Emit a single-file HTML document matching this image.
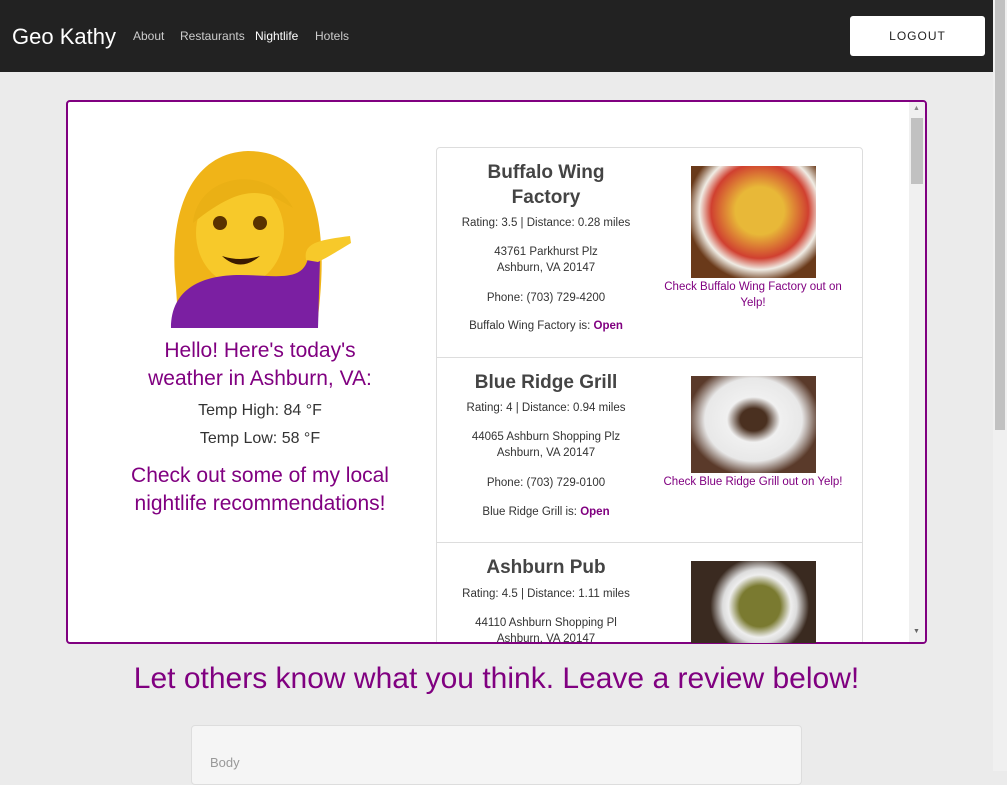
<!DOCTYPE html>
<html><head><style>
*{box-sizing:border-box;margin:0;padding:0}
body{width:1007px;height:771px;overflow:hidden;background:#ebebeb;font-family:"Liberation Sans",sans-serif;position:relative}
.a{position:absolute}
.nav{left:0;top:0;width:993px;height:72px;background:#222}
.c{text-align:center;color:#333}
.card{position:absolute;left:436px;width:427px;border:1px solid #ddd;background:#fff}
.t{position:absolute;left:0;width:218px;text-align:center;color:#333}
.h{font-size:19px;line-height:25px;font-weight:bold;color:#444}
.s{font-size:11.5px;line-height:16px}
.lk{position:absolute;width:200px;left:216px;text-align:center;font-size:11.5px;line-height:16px;color:#800080}
b{color:#800080}
</style></head><body>
<div class="a nav"></div>
<div class="a" style="left:12px;top:24px;color:#fff;font-size:22px">Geo Kathy</div>
<div class="a" style="left:133px;top:29px;color:#ccc;font-size:12px">About</div>
<div class="a" style="left:180px;top:29px;color:#ccc;font-size:12px">Restaurants</div>
<div class="a" style="left:255px;top:29px;color:#fff;font-size:12px">Nightlife</div>
<div class="a" style="left:315px;top:29px;color:#ccc;font-size:12px">Hotels</div>
<div class="a" style="left:850px;top:16px;width:135px;height:40px;background:#fff;border-radius:3px;text-align:center;line-height:40px;font-size:12px;letter-spacing:1px;color:#222">LOGOUT</div>
<div class="a" style="left:993px;top:0;width:14px;height:771px;background:#f0f0f0"></div>
<div class="a" style="left:995px;top:0;width:10px;height:430px;background:#c1c1c1"></div>

<div class="a" style="left:66px;top:100px;width:861px;height:544px;border:2px solid #800080;border-radius:4px;background:#fff;overflow:hidden">
 <div class="a" style="left:841px;top:0;width:16px;height:540px;background:#f0f0f0"></div>
 <div class="a" style="left:843px;top:16px;width:12px;height:66px;background:#c1c1c1"></div>
 <div class="a" style="left:845px;top:3px;font-size:7px;color:#888">▲</div>
 <div class="a" style="left:845px;top:526px;font-size:7px;color:#666">▼</div>
</div>
<svg class="a" style="left:168px;top:148px" width="186" height="180" viewBox="0 0 186 180">
 <path d="M8 140 C0 70 20 5 80 3 C140 3 160 60 152 150 L150 170 L10 170 Z" fill="#f0b418"/>
 <ellipse cx="72" cy="85" rx="44" ry="52" fill="#f7c92a"/>
 <path d="M25 75 C30 25 100 15 125 60 C100 45 80 30 25 75Z" fill="#eab015"/>
 <circle cx="52" cy="75" r="7" fill="#5a3200"/><circle cx="92" cy="75" r="7" fill="#5a3200"/>
 <path d="M54 108 Q72 125 92 108 Q72 114 54 108Z" fill="#3a1a00"/>
 <path d="M3 180 C3 140 35 127 72 127 C105 127 135 135 140 110 L152 110 L150 180 Z" fill="#7b1fa2"/>
 <path d="M138 112 C135 95 150 92 182 88 L183 95 C168 104 162 108 150 114Z" fill="#f7c92a"/>
</svg>
<div class="a c" style="left:125px;top:337px;width:270px;font-size:21px;line-height:28px;color:#800080">Hello! Here's today's weather in Ashburn, VA:</div>
<div class="a c" style="left:95px;top:397px;width:330px;font-size:16px;line-height:28px">Temp High: 84 °F<br>Temp Low: 58 °F</div>
<div class="a c" style="left:100px;top:462px;width:320px;font-size:21px;line-height:28px;color:#800080">Check out some of my local nightlife recommendations!</div>

<div class="card" style="top:147px;height:211px;border-radius:4px 4px 0 0">
 <div class="t h" style="top:12px">Buffalo Wing<br>Factory</div>
 <div class="t s" style="top:67px">Rating: 3.5 | Distance: 0.28 miles</div>
 <div class="t s" style="top:96px">43761 Parkhurst Plz<br>Ashburn, VA 20147</div>
 <div class="t s" style="top:142px">Phone: (703) 729-4200</div>
 <div class="t s" style="top:170px">Buffalo Wing Factory is: <b>Open</b></div>
 <div class="a" style="left:254px;top:18px;width:125px;height:112px;background:radial-gradient(ellipse at 55% 40%,#e8b838 25%,#d04030 50%,#f0ece4 62%,#6a3a1a 75%)"></div>
 <div class="lk" style="top:131px">Check Buffalo Wing Factory out on Yelp!</div>
</div>
<div class="card" style="top:357px;height:186px">
 <div class="t h" style="top:12px">Blue Ridge Grill</div>
 <div class="t s" style="top:42px">Rating: 4 | Distance: 0.94 miles</div>
 <div class="t s" style="top:71px">44065 Ashburn Shopping Plz<br>Ashburn, VA 20147</div>
 <div class="t s" style="top:117px">Phone: (703) 729-0100</div>
 <div class="t s" style="top:146px">Blue Ridge Grill is: <b>Open</b></div>
 <div class="a" style="left:254px;top:18px;width:125px;height:97px;background:radial-gradient(ellipse at 50% 45%,#4a3020 15%,#f0f0f0 30%,#e8e8e8 55%,#5a3a2a 75%)"></div>
 <div class="lk" style="top:116px">Check Blue Ridge Grill out on Yelp!</div>
</div>
<div class="card" style="top:542px;height:100px;border-bottom:none">
 <div class="t h" style="top:12px">Ashburn Pub</div>
 <div class="t s" style="top:43px">Rating: 4.5 | Distance: 1.11 miles</div>
 <div class="t s" style="top:72px">44110 Ashburn Shopping Pl<br>Ashburn, VA 20147</div>
 <div class="a" style="left:254px;top:18px;width:125px;height:82px;background:radial-gradient(circle at 55% 55%,#7a7a30 25%,#eee 38%,#ddd 45%,#3a2a20 60%)"></div>
</div>

<div class="a c" style="left:0;top:662px;width:993px;font-size:30px;color:#800080">Let others know what you think. Leave a review below!</div>
<div class="a" style="left:191px;top:725px;width:611px;height:60px;background:#f5f5f5;border:1px solid #ddd;border-radius:4px"></div>
<div class="a" style="left:210px;top:755px;font-size:13px;color:#999">Body</div>
</body></html>
